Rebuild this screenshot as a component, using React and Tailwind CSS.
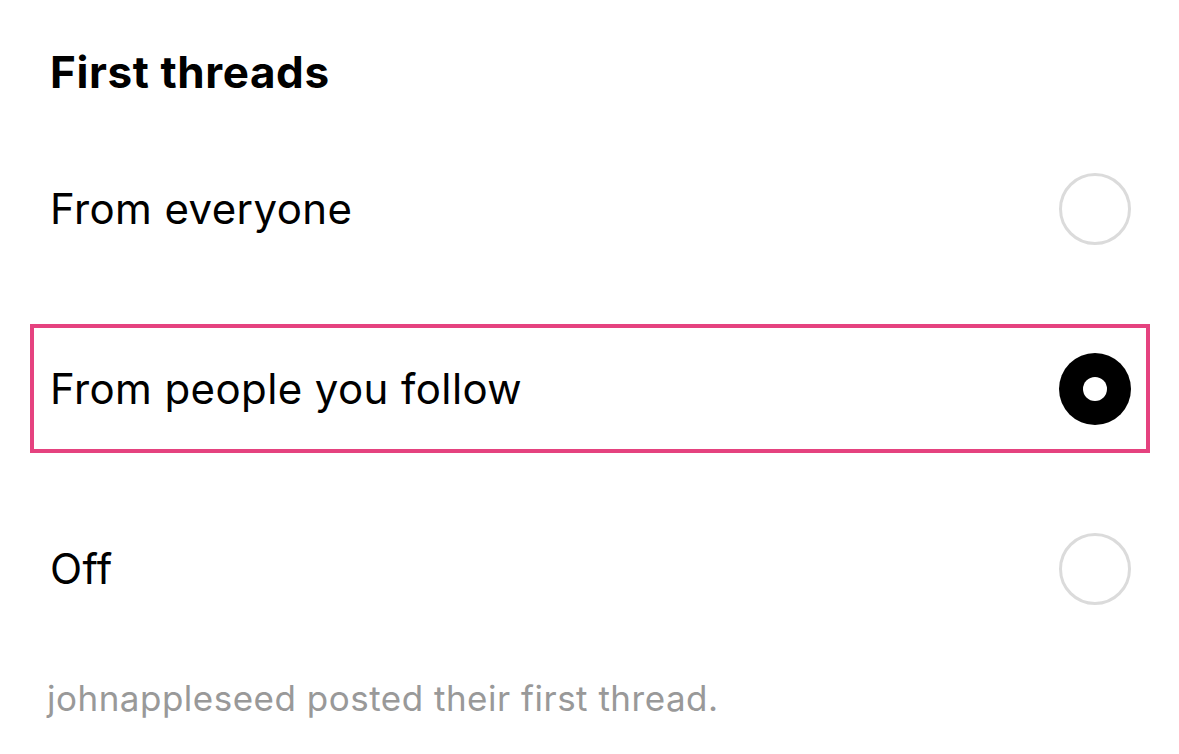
import React, { useState } from 'react';

const options = [
  { id: 'everyone', label: 'From everyone' },
  { id: 'following', label: 'From people you follow' },
  { id: 'off', label: 'Off' },
];

function Radio({ checked }) {
  if (checked) {
    return (
      <div className="w-[72px] h-[72px] rounded-full bg-black flex items-center justify-center shrink-0">
        <div className="w-[24px] h-[24px] rounded-full bg-white" />
      </div>
    );
  }
  return <div className="w-[72px] h-[72px] rounded-full border-[3.5px] border-[#dbdbdb] shrink-0" />;
}

export default function App() {
  const [selected, setSelected] = useState('following');

  return (
    <div className="min-h-screen bg-white pl-[30px] pr-[29px] font-['Inter',sans-serif] text-black">
      <h1 className="pl-[20px] pt-[48px] h-[144px] text-[44px] font-bold leading-[48px] tracking-[0.6px]">
        First threads
      </h1>

      <div className="flex flex-col gap-[51px]">
        {options.map((opt) => (
          <div
            key={opt.id}
            onClick={() => setSelected(opt.id)}
            className={
              'h-[129px] flex items-center justify-between pl-[16px] pr-[15px] border-4 ' +
              (opt.id === 'following' ? 'border-[#e5427f]' : 'border-transparent')
            }
          >
            <span className="text-[42px] leading-none tracking-[0.4px]">{opt.label}</span>
            <Radio checked={selected === opt.id} />
          </div>
        ))}
      </div>

      <p className="pl-[17px] pt-[48px] text-[35px] leading-none tracking-[0.5px] text-[#999999]">
        johnappleseed posted their first thread.
      </p>
    </div>
  );
}
